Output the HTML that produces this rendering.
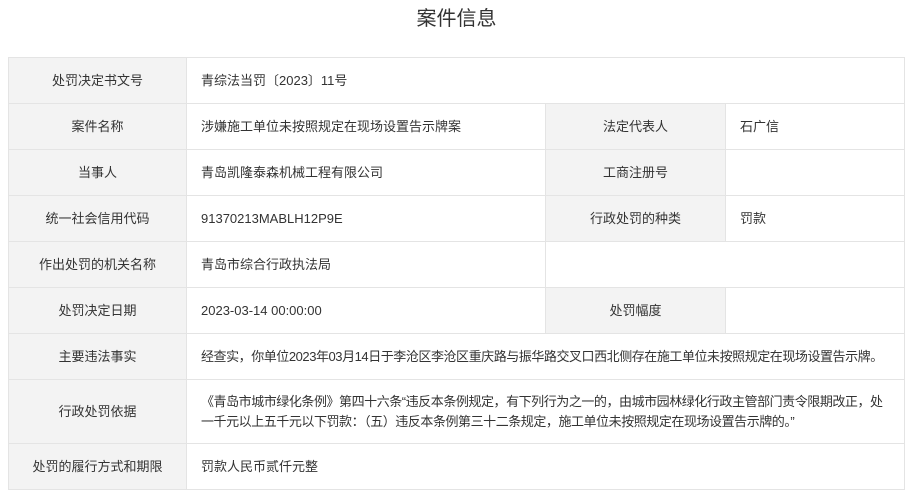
<!DOCTYPE html>
<html><head><meta charset="utf-8"><style>
body{margin:0;background:#fff;font-family:"Liberation Sans","Noto Sans CJK SC",sans-serif;color:#333;}
h1{margin:0;height:40px;line-height:38px;text-align:center;font-size:20px;font-weight:normal;color:#333;}
table{position:absolute;left:8px;top:57px;width:896px;border-collapse:collapse;table-layout:fixed;font-size:13px;}
td{border:1px solid #e4e4e4;height:45px;padding:0 14px;line-height:20px;}
td.l{background:#f3f3f3;text-align:center;padding:0 4px;}
td.n{white-space:nowrap;letter-spacing:-0.45px;padding-right:0;overflow:hidden;}
</style></head><body>
<h1>案件信息</h1>
<table>
<colgroup><col style="width:178px"><col style="width:359px"><col style="width:180px"><col style="width:179px"></colgroup>
<tr><td class="l">处罚决定书文号</td><td colspan="3">青综法当罚〔2023〕11号</td></tr>
<tr><td class="l">案件名称</td><td>涉嫌施工单位未按照规定在现场设置告示牌案</td><td class="l">法定代表人</td><td>石广信</td></tr>
<tr><td class="l">当事人</td><td>青岛凯隆泰森机械工程有限公司</td><td class="l">工商注册号</td><td></td></tr>
<tr><td class="l">统一社会信用代码</td><td>91370213MABLH12P9E</td><td class="l">行政处罚的种类</td><td>罚款</td></tr>
<tr><td class="l">作出处罚的机关名称</td><td>青岛市综合行政执法局</td><td colspan="2"></td></tr>
<tr><td class="l">处罚决定日期</td><td>2023-03-14 00:00:00</td><td class="l">处罚幅度</td><td></td></tr>
<tr><td class="l">主要违法事实</td><td colspan="3" class="n">经查实，你单位2023年03月14日于李沧区李沧区重庆路与振华路交叉口西北侧存在施工单位未按照规定在现场设置告示牌。</td></tr>
<tr><td class="l" style="height:63px">行政处罚依据</td><td colspan="3" class="n">《青岛市城市绿化条例》第四十六条“违反本条例规定，有下列行为之一的，由城市园林绿化行政主管部门责令限期改正，处<br>一千元以上五千元以下罚款：（五）违反本条例第三十二条规定，施工单位未按照规定在现场设置告示牌的。”</td></tr>
<tr><td class="l">处罚的履行方式和期限</td><td colspan="3">罚款人民币贰仟元整</td></tr>
</table>
</body></html>
